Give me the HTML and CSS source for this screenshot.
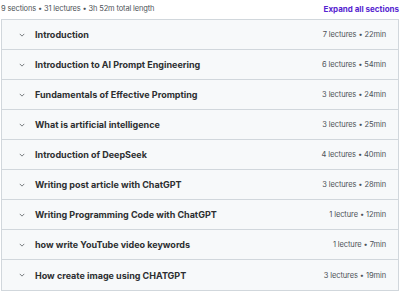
FILE: index.html
```html
<!DOCTYPE html>
<html lang="en">
<head>
<meta charset="UTF-8">
<meta name="viewport" content="width=device-width, initial-scale=1.0">
<title>Course content</title>
<link rel="stylesheet" href="styles.css">
</head>
<body>

<div class="curriculum">
    <div class="summary">
        <span class="stats">9 sections • 31 lectures • 3h 52m total length</span>
        <button class="expand">Expand all sections</button>
    </div>

    <div class="sections">
        <div class="section">
            <span class="chevron"><svg viewBox="0 0 8 5" width="6" height="4"><path d="M1 1l3 3 3-3" fill="none" stroke="#6a6f73" stroke-width="1.2"/></svg></span>
            <span class="title">Introduction</span>
            <span class="meta">7 lectures • 22min</span>
        </div>
        <div class="section">
            <span class="chevron"><svg viewBox="0 0 8 5" width="6" height="4"><path d="M1 1l3 3 3-3" fill="none" stroke="#6a6f73" stroke-width="1.2"/></svg></span>
            <span class="title">Introduction to AI Prompt Engineering</span>
            <span class="meta">6 lectures • 54min</span>
        </div>
        <div class="section">
            <span class="chevron"><svg viewBox="0 0 8 5" width="6" height="4"><path d="M1 1l3 3 3-3" fill="none" stroke="#6a6f73" stroke-width="1.2"/></svg></span>
            <span class="title">Fundamentals of Effective Prompting</span>
            <span class="meta">3 lectures • 24min</span>
        </div>
        <div class="section">
            <span class="chevron"><svg viewBox="0 0 8 5" width="6" height="4"><path d="M1 1l3 3 3-3" fill="none" stroke="#6a6f73" stroke-width="1.2"/></svg></span>
            <span class="title">What is artificial intelligence</span>
            <span class="meta">3 lectures • 25min</span>
        </div>
        <div class="section">
            <span class="chevron"><svg viewBox="0 0 8 5" width="6" height="4"><path d="M1 1l3 3 3-3" fill="none" stroke="#6a6f73" stroke-width="1.2"/></svg></span>
            <span class="title">Introduction of DeepSeek</span>
            <span class="meta">4 lectures • 40min</span>
        </div>
        <div class="section">
            <span class="chevron"><svg viewBox="0 0 8 5" width="6" height="4"><path d="M1 1l3 3 3-3" fill="none" stroke="#6a6f73" stroke-width="1.2"/></svg></span>
            <span class="title">Writing post article with ChatGPT</span>
            <span class="meta">3 lectures • 28min</span>
        </div>
        <div class="section">
            <span class="chevron"><svg viewBox="0 0 8 5" width="6" height="4"><path d="M1 1l3 3 3-3" fill="none" stroke="#6a6f73" stroke-width="1.2"/></svg></span>
            <span class="title">Writing Programming Code with ChatGPT</span>
            <span class="meta">1 lecture • 12min</span>
        </div>
        <div class="section">
            <span class="chevron"><svg viewBox="0 0 8 5" width="6" height="4"><path d="M1 1l3 3 3-3" fill="none" stroke="#6a6f73" stroke-width="1.2"/></svg></span>
            <span class="title">how write YouTube video keywords</span>
            <span class="meta">1 lecture • 7min</span>
        </div>
        <div class="section">
            <span class="chevron"><svg viewBox="0 0 8 5" width="6" height="4"><path d="M1 1l3 3 3-3" fill="none" stroke="#6a6f73" stroke-width="1.2"/></svg></span>
            <span class="title">How create image using CHATGPT</span>
            <span class="meta">3 lectures • 19min</span>
        </div>
    </div>
</div>

</body>
</html>
```

FILE: styles.css
```css
body {
    font-family: Inter, "Noto Sans", Arial, sans-serif;
    background-color: #fff;
    color: #2d2f31;
    margin: 0;
    padding: 0;
}

.curriculum {
    padding: 0 1px 0 1px;
}

.summary {
    display: flex;
    justify-content: space-between;
    align-items: center;
    height: 17px;
    margin-bottom: 2px;
}

.stats {
    font-size: 7.5px;
    color: #4d5257;
    letter-spacing: -0.15px;
}

.expand {
    background: none;
    border: none;
    padding: 0;
    font-family: inherit;
    font-size: 8px;
    font-weight: 700;
    color: #5624d0;
    cursor: pointer;
}

.sections {
    border: 1px solid #d1d7dc;
}

.section {
    display: flex;
    align-items: center;
    height: 29px;
    padding: 0 12px 0 17px;
    background-color: #f7f9fa;
    border-bottom: 1px solid #d1d7dc;
}

.section:last-child {
    border-bottom: none;
    height: 30px;
}

.chevron {
    display: flex;
    width: 16px;
}

.title {
    flex: 1;
    font-size: 9px;
    font-weight: 700;
    color: #2d2f31;
}

.meta {
    font-size: 7.5px;
    color: #4d5257;
    letter-spacing: -0.1px;
}
```
